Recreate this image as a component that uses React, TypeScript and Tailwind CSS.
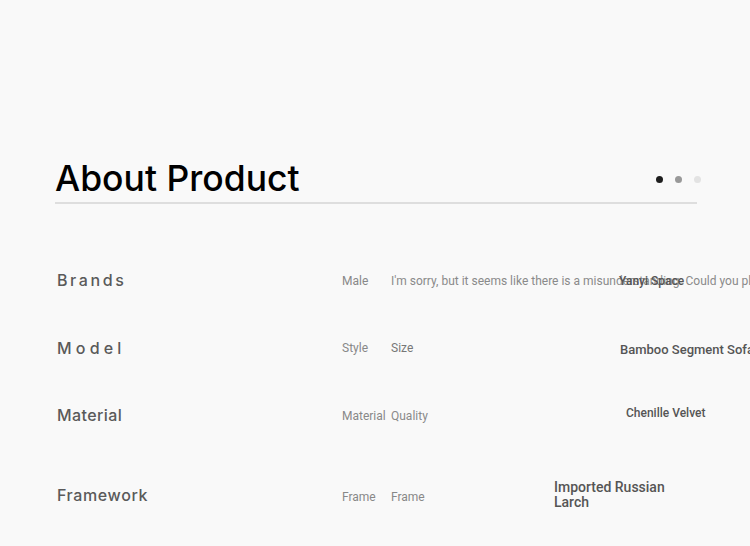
const rows = [
  {
    label: 'Brands',
    labelClass: 'tracking-[2.6px]',
    a: 'Male',
    b: "I'm sorry, but it seems like there is a misunderstanding. Could you please provide more details?",
    bClass: 'text-[#8a8a8a]',
    cellPad: 'pt-[1px]',
    value: 'Yanyi Space',
    valueClass: 'ml-[228px] pt-[1px] text-[12px] font-medium',
    h: 'h-[68px]',
  },
  {
    label: 'Model',
    labelClass: 'tracking-[4.2px]',
    a: 'Style',
    b: 'Size',
    bClass: 'text-[#777]',
    cellPad: '',
    value: 'Bamboo Segment Sofa',
    valueClass: 'ml-[229px] text-[13px] font-medium mt-[4px]',
    h: 'h-[67px]',
  },
  {
    label: 'Material',
    labelClass: 'tracking-[0.4px]',
    a: 'Material',
    b: 'Quality',
    bClass: 'text-[#8a8a8a]',
    cellPad: 'pt-[2px]',
    value: 'Chenille Velvet',
    valueClass: 'ml-[235px] text-[12px] font-medium -mt-[4px]',
    h: 'h-[67px]',
  },
  {
    label: 'Framework',
    labelClass: 'tracking-[0.6px]',
    a: 'Frame',
    b: 'Frame',
    bClass: 'text-[#888]',
    cellPad: 'pt-[4px]',
    value: 'Imported Russian Larch',
    valueClass: 'ml-[163px] w-[125px] text-[14px] font-medium leading-[15px]',
    h: 'h-[94px]',
  },
]

export default function App() {
  return (
    <div className="min-h-[546px] w-[750px] overflow-hidden bg-[#f9f9f9] font-['Roboto',sans-serif]">
      <section className="pl-[55px] pt-[159px]">
        <div className="flex w-[642px] items-center justify-between border-b-2 border-[#dedede] pb-[3px]">
          <h1 className="font-['Inter',sans-serif] text-[35.5px] font-medium leading-[40px] text-black">
            About Product
          </h1>
          <div className="-mr-[4px] flex items-center gap-[12px]">
            <span className="h-[7px] w-[7px] rounded-full bg-[#1e1e1e]" />
            <span className="h-[7px] w-[7px] rounded-full bg-[#999]" />
            <span className="h-[7px] w-[7px] rounded-full bg-[#e3e3e3]" />
          </div>
        </div>

        <div className="mt-[42px] flex flex-col">
          {rows.map((r) => (
            <div key={r.label} className={`flex items-center ${r.h}`}>
              <div
                className={`w-[287px] shrink-0 pl-[2px] font-['Inter',sans-serif] text-[16px] font-medium text-[#5a5a5a] ${r.labelClass}`}
              >
                {r.label}
              </div>
              <div className={`w-[49px] shrink-0 whitespace-nowrap text-[12px] text-[#888] ${r.cellPad}`}>{r.a}</div>
              <div className={`w-0 shrink-0 whitespace-nowrap text-[12px] ${r.bClass} ${r.cellPad}`}>{r.b}</div>
              <div className={`shrink-0 text-[#555] ${r.valueClass}`}>{r.value}</div>
            </div>
          ))}
        </div>
      </section>
    </div>
  )
}
